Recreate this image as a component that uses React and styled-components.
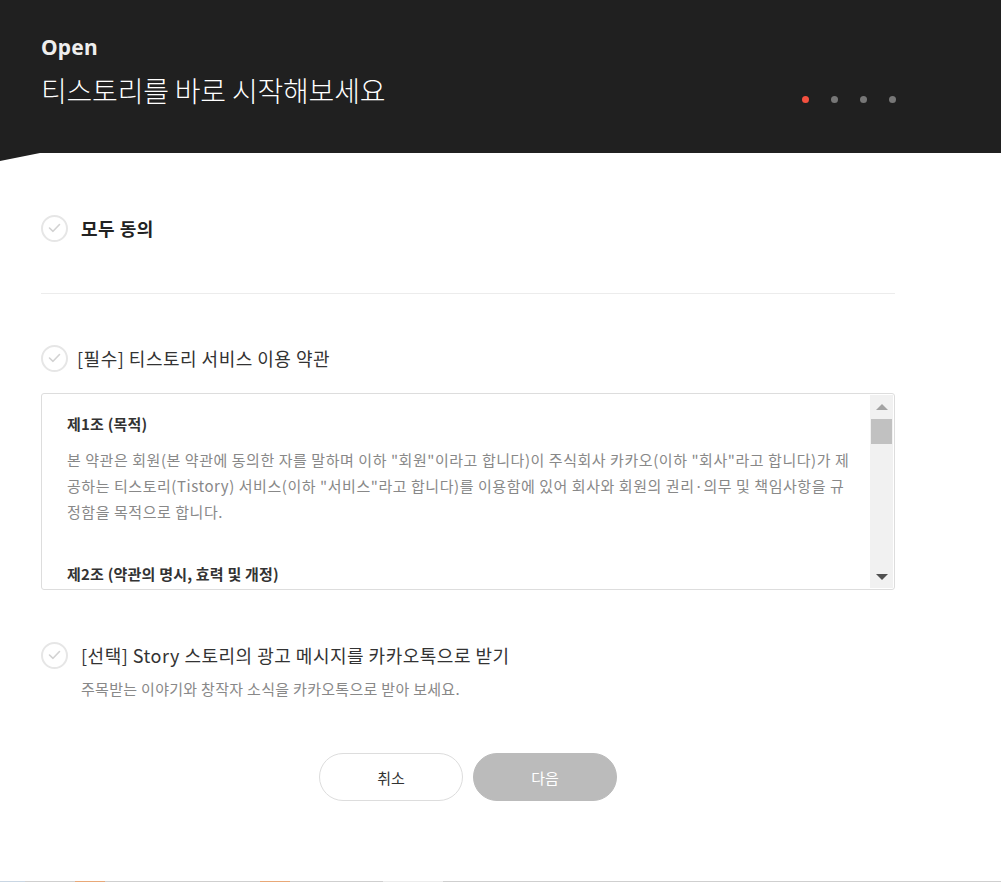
import React from "react";
import styled, { createGlobalStyle } from "styled-components";

const Global = createGlobalStyle`
  html, body { margin: 0; padding: 0; background: #fff; }
  body { font-family: "Noto Sans CJK KR", "Noto Sans", sans-serif; color: #333; }
  * { box-sizing: border-box; }
`;

const Page = styled.div`
  width: 1001px;
  height: 882px;
  position: relative;
  overflow: hidden;
  display: flex;
  flex-direction: column;
`;

const Header = styled.header`
  height: 161px;
  background: #202020;
  clip-path: polygon(0 0, 100% 0, 100% 153px, 40px 153px, 0 161px);
  padding: 30px 0 0 41px;
  display: flex;
  align-items: flex-start;
  justify-content: space-between;
  flex-shrink: 0;
`;

const TitleBlock = styled.div`
  display: flex;
  flex-direction: column;
`;

const Brand = styled.div`
  font-family: "Noto Sans", sans-serif;
  font-weight: 700;
  font-size: 21px;
  line-height: 34px;
  color: #eee;
  letter-spacing: 0.2px;
`;

const Title = styled.h1`
  margin: 0;
  font-weight: 300;
  font-size: 28px;
  line-height: 52px;
  color: #fff;
  letter-spacing: -0.2px;
`;

const Dots = styled.div`
  display: flex;
  gap: 22px;
  margin: 66px 105px 0 0;
`;

const Dot = styled.span`
  width: 7px;
  height: 7px;
  border-radius: 50%;
  background: ${(p) => (p.$active ? "#f4503f" : "#777")};
`;

const Content = styled.main`
  width: 854px;
  margin-left: 41px;
  margin-top: -8px;
  display: flex;
  flex-direction: column;
`;

const CheckRow = styled.label`
  display: flex;
  align-items: center;
  gap: ${(p) => p.$gap}px;
  height: 26px;
  margin-top: ${(p) => p.$top || 0}px;
  cursor: pointer;
`;

const CheckCircle = styled.span`
  width: 27px;
  height: 27px;
  border-radius: 50%;
  border: 2px solid #e6e6e6;
  display: flex;
  align-items: center;
  justify-content: center;
  flex-shrink: 0;
`;

const CheckLabel = styled.span`
  font-size: 18px;
  font-weight: ${(p) => (p.$bold ? 700 : 400)};
  color: ${(p) => (p.$bold ? "#222" : "#333")};
  letter-spacing: 0.5px;
`;

const Divider = styled.hr`
  border: 0;
  border-top: 1px solid #ececec;
  margin: 52px 0 0;
`;

const TermsBox = styled.div`
  margin-top: 22px;
  height: 197px;
  border: 1px solid #ddd;
  border-radius: 3px;
  display: flex;
  overflow: hidden;
`;

const TermsText = styled.div`
  flex: 1;
  overflow: hidden;
  padding: 19px 16px 0 25px;
`;

const TermsHeading = styled.h3`
  margin: 0;
  font-size: 15px;
  font-weight: 700;
  line-height: 22px;
  color: #333;
  letter-spacing: 0.2px;
`;

const TermsPara = styled.p`
  margin: 12px 0 38px;
  font-size: 15px;
  line-height: 26px;
  color: #888;
  letter-spacing: 0.55px;
  word-break: break-all;
`;

const Scrollbar = styled.div`
  width: 23px;
  margin: 1px 1px 1px 0;
  background: #f1f1f1;
  display: flex;
  flex-direction: column;
  align-items: center;
`;

const Arrow = styled.span`
  width: 0;
  height: 0;
  border-left: 6px solid transparent;
  border-right: 6px solid transparent;
  ${(p) =>
    p.$down
      ? "border-top: 6px solid #505050; margin-top: auto; margin-bottom: 8px;"
      : "border-bottom: 6px solid #a3a3a3; margin-top: 9px;"}
`;

const Thumb = styled.span`
  width: 21px;
  height: 25px;
  background: #c1c1c1;
  margin-top: 9px;
`;

const SubText = styled.p`
  margin: 11px 0 0 40px;
  font-size: 15px;
  line-height: 20px;
  color: #888;
  letter-spacing: 0.3px;
`;

const Buttons = styled.div`
  display: flex;
  justify-content: center;
  gap: 10px;
  margin-top: 54px;
`;

const Button = styled.button`
  width: 144px;
  height: 48px;
  border-radius: 24px;
  font-family: "Noto Sans CJK KR", sans-serif;
  font-size: 15px;
  border: 1px solid ${(p) => (p.$primary ? "#bbb" : "#ddd")};
  background: ${(p) => (p.$primary ? "#bbb" : "#fff")};
  color: ${(p) => (p.$primary ? "#fff" : "#333")};
  cursor: pointer;
`;

const BottomLine = styled.div`
  position: absolute;
  left: 0;
  right: 0;
  bottom: 0;
  height: 1px;
  background: linear-gradient(
    to right,
    #c9d6e3 0 25px,
    #cfcfcf 25px 75px,
    #e8a878 75px 105px,
    #cfcfcf 105px 260px,
    #e8a878 260px 290px,
    #cfcfcf 290px 383px,
    #ececec 383px 443px,
    #cfcfcf 443px 100%
  );
`;

const CheckIcon = () => (
  <svg width="13" height="10" viewBox="0 0 13 10" fill="none">
    <path d="M1.5 5 L5 8.3 L11.5 1.5" stroke="#d2d2d2" strokeWidth="1.6" strokeLinecap="round" strokeLinejoin="round" />
  </svg>
);

const Check = ({ children, bold, top, gap = 13 }) => (
  <CheckRow $top={top} $gap={gap}>
    <CheckCircle>
      <CheckIcon />
    </CheckCircle>
    <CheckLabel $bold={bold}>{children}</CheckLabel>
  </CheckRow>
);

export default function App() {
  return (
    <Page>
      <Global />
      <Header>
        <TitleBlock>
          <Brand>Open</Brand>
          <Title>티스토리를 바로 시작해보세요</Title>
        </TitleBlock>
        <Dots>
          <Dot $active />
          <Dot />
          <Dot />
          <Dot />
        </Dots>
      </Header>
      <Content>
        <Check bold top={62}>모두 동의</Check>
        <Divider />
        <Check top={51} gap={9}>[필수] 티스토리 서비스 이용 약관</Check>
        <TermsBox>
          <TermsText>
            <TermsHeading>제1조 (목적)</TermsHeading>
            <TermsPara>
              본 약관은 회원(본 약관에 동의한 자를 말하며 이하 "회원"이라고 합니다)이 주식회사 카카오(이하 "회사"라고 합니다)가 제공하는 티스토리(Tistory) 서비스(이하 "서비스"라고 합니다)를 이용함에 있어 회사와 회원의 권리·의무 및 책임사항을 규정함을 목적으로 합니다.
            </TermsPara>
            <TermsHeading>제2조 (약관의 명시, 효력 및 개정)</TermsHeading>
          </TermsText>
          <Scrollbar>
            <Arrow />
            <Thumb />
            <Arrow $down />
          </Scrollbar>
        </TermsBox>
        <Check top={52}>[선택] Story 스토리의 광고 메시지를 카카오톡으로 받기</Check>
        <SubText>주목받는 이야기와 창작자 소식을 카카오톡으로 받아 보세요.</SubText>
        <Buttons>
          <Button>취소</Button>
          <Button $primary>다음</Button>
        </Buttons>
      </Content>
      <BottomLine />
    </Page>
  );
}
